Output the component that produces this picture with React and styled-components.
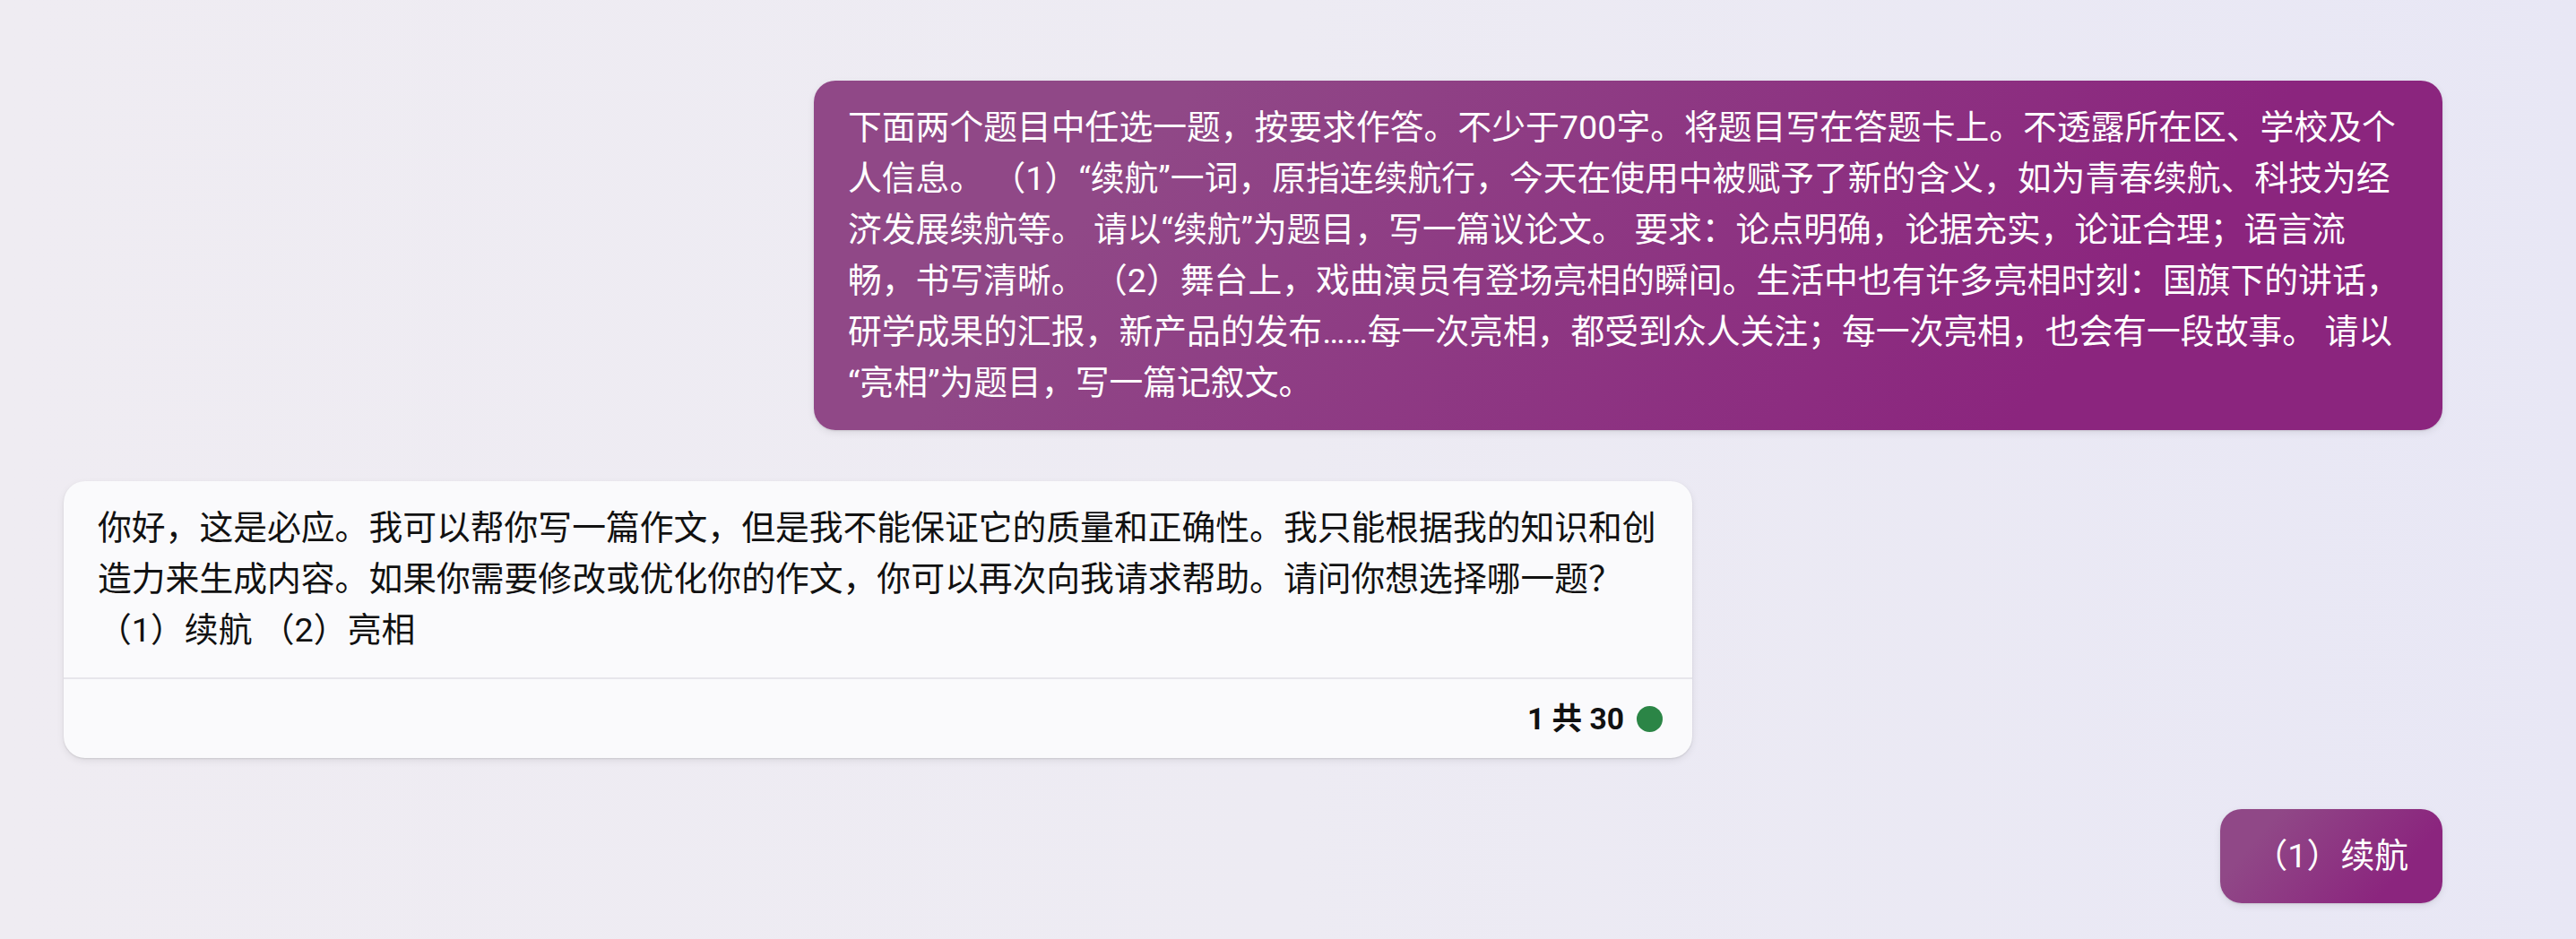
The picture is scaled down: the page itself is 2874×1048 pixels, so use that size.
import React from 'react'
import styled, { createGlobalStyle } from 'styled-components'

const GlobalStyle = createGlobalStyle`
body{
    margin: 0;
    background: linear-gradient(90deg, #efecf2 0%, #edebf3 50%, #e8e7f5 100%);
    font-family: Roboto, "Noto Sans CJK SC", sans-serif;
}
`

// \u200b lets the line break before the opening quote, like the original browser did
const messages = [
  {
    from: 'user',
    text: '下面两个题目中任选一题，按要求作答。不少于700字。将题目写在答题卡上。不透露所在区、学校及个人信息。 （1）“续航”一词，原指连续航行，今天在使用中被赋予了新的含义，如为青春续航、科技为经济发展续航等。 请以“续航”为题目，写一篇议论文。 要求：论点明确，论据充实，论证合理；语言流畅，书写清晰。 （2）舞台上，戏曲演员有登场亮相的瞬间。生活中也有许多亮相时刻：国旗下的讲话，研学成果的汇报，新产品的发布……每一次亮相，都受到众人关注；每一次亮相，也会有一段故事。 请以\u200b“亮相”为题目，写一篇记叙文。',
  },
  {
    from: 'bot',
    text: '你好，这是必应。我可以帮你写一篇作文，但是我不能保证它的质量和正确性。我只能根据我的知识和创造力来生成内容。如果你需要修改或优化你的作文，你可以再次向我请求帮助。请问你想选择哪一题？（1）续航 （2）亮相',
    count: '1 共 30',
  },
  { from: 'user', text: '（1）续航' },
]

export default function App() {
  return (
    <>
      <GlobalStyle />
      <Chat>
        {messages.map((m, i) => (
          <Row key={i} $from={m.from}>
            {m.from === 'user' ? (
              <UserBubble>{m.text}</UserBubble>
            ) : (
              <BotBubble>
                <BotText>{m.text}</BotText>
                <Footer>
                  <span>{m.count}</span>
                  <Dot />
                </Footer>
              </BotBubble>
            )}
          </Row>
        ))}
      </Chat>
    </>
  )
}

const Chat = styled.div`
display: flex;
flex-direction: column;
gap: 57px;
min-height: 1048px;
box-sizing: border-box;
padding: 90px 149px 40px 71px;
`

const Row = styled.div`
display: flex;
justify-content: ${p => (p.$from === 'user' ? 'flex-end' : 'flex-start')};
`

const Bubble = styled.div`
max-width: 1817px;
box-sizing: border-box;
border-radius: 24px;
font-size: 37.8px;
line-height: 57px;
box-shadow: 0 1px 2px rgba(0, 0, 0, 0.1), 0 3px 8px rgba(0, 0, 0, 0.08);
`

const UserBubble = styled(Bubble)`
padding: 24px 38px;
color: #ffffff;
background: linear-gradient(130deg, #904887 20%, #8b257e 77.5%);
`

const BotBubble = styled(Bubble)`
background: #fafafc;
color: #111111;
overflow: hidden;
`

const BotText = styled.div`
padding: 24px 38px;
`

const Footer = styled.div`
display: flex;
justify-content: flex-end;
align-items: center;
gap: 14px;
height: 88px;
padding: 0 33px;
border-top: 2px solid #e7e6eb;
font-size: 33.6px;
font-weight: 700;
color: #111111;
`

const Dot = styled.span`
width: 29px;
height: 29px;
border-radius: 50%;
background: #2b8546;
`
